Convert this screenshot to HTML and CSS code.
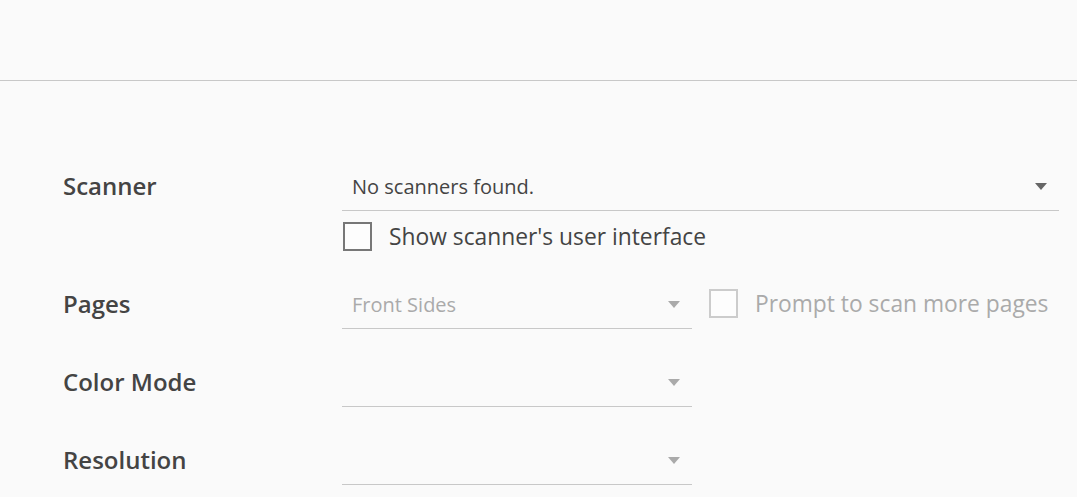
FILE: index.html
```html
<!DOCTYPE html>
<html>
<head>
<meta charset="utf-8">
<link rel="stylesheet" href="styles.css">
</head>
<body>
<div class="header"></div>
<div class="form">
  <div class="label">Scanner</div>
  <div class="field">
    <div class="select wide">
      <span class="value">No scanners found.</span>
      <span class="arrow"></span>
    </div>
    <label class="check">
      <span class="box"></span>
      <span class="check-text">Show scanner's user interface</span>
    </label>
  </div>

  <div class="label">Pages</div>
  <div class="field row">
    <div class="select narrow disabled">
      <span class="value">Front Sides</span>
      <span class="arrow"></span>
    </div>
    <label class="check inline disabled">
      <span class="box"></span>
      <span class="check-text">Prompt to scan more pages</span>
    </label>
  </div>

  <div class="label">Color Mode</div>
  <div class="field">
    <div class="select narrow disabled">
      <span class="value"></span>
      <span class="arrow"></span>
    </div>
  </div>

  <div class="label">Resolution</div>
  <div class="field">
    <div class="select narrow disabled">
      <span class="value"></span>
      <span class="arrow"></span>
    </div>
  </div>
</div>
</body>
</html>
```
FILE: styles.css
```css
html, body {
  margin: 0;
  padding: 0;
  background: #fafafa;
  font-family: "Open Sans", "Noto Sans", sans-serif;
  color: #444;
}
.header {
  height: 80px;
  border-bottom: 1px solid #c8c8c8;
}
.form {
  display: grid;
  grid-template-columns: 279px 717px;
  row-gap: 30px;
  padding: 82px 0 0 63px;
}
.label {
  height: 48px;
  line-height: 45px;
  font-size: 24px;
  font-weight: 600;
  color: #444;
}
.field {
  display: flex;
  flex-direction: column;
}
.field.row {
  flex-direction: row;
  align-items: flex-start;
}
.select {
  height: 47px;
  border-bottom: 1px solid #c8c8c8;
  display: flex;
  align-items: center;
  justify-content: space-between;
  padding: 0 12px 0 10px;
  box-sizing: content-box;
}
.select.wide { width: 695px; }
.select.narrow { width: 328px; }
.value {
  font-size: 20px;
  color: #444;
  margin-top: -1px;
}
.arrow {
  width: 0;
  height: 0;
  border-left: 6px solid transparent;
  border-right: 6px solid transparent;
  border-top: 7px solid #666;
}
.select.disabled .value { color: #aaa; }
.select.disabled .arrow { border-top-color: #aaa; }
.check {
  display: flex;
  align-items: center;
  margin-top: 11px;
  height: 29px;
  padding-left: 1px;
}
.box {
  width: 25px;
  height: 25px;
  border: 2px solid #777;
  background: #fdfdfd;
  flex: none;
}
.check-text {
  margin-left: 17px;
  font-size: 22.8px;
  color: #444;
}
.check.inline {
  margin-top: 8px;
  margin-left: 17px;
  padding-left: 0;
}
.check.disabled .box { border-color: #ccc; }
.check.disabled .check-text { color: #aaa; }
```
